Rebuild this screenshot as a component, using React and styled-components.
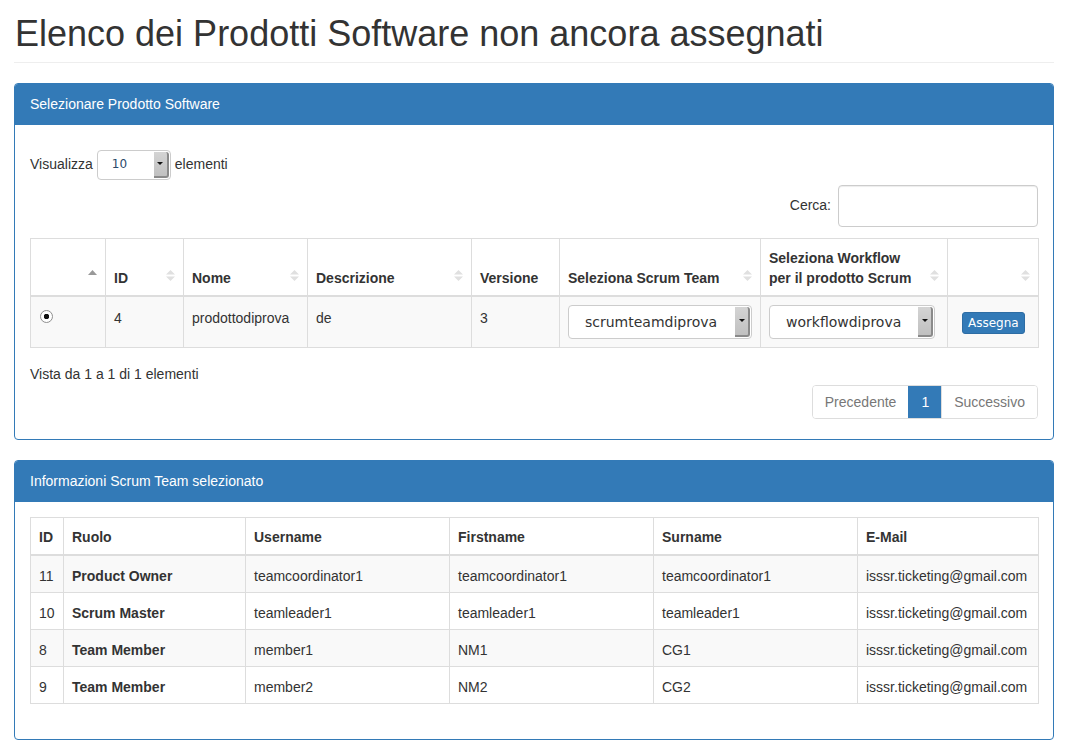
import React from 'react'
import styled, { createGlobalStyle } from 'styled-components'

const GlobalStyle = createGlobalStyle`
    html, body {
        margin: 0;
        padding: 0;
        background: #fff;
    }
    body {
        font-family: "Liberation Sans", Arial, Helvetica, sans-serif;
        font-size: 14px;
        line-height: 1.42857;
        color: #333;
    }
    * { box-sizing: border-box; }
`

const Page = styled.div`
    padding: 14px 15px 0 14px;
`

const PageHeader = styled.h1`
    margin: 0 0 20px;
    padding: 0 0 8px 1px;
    border-bottom: 1px solid #eee;
    font-size: 36px;
    font-weight: 400;
    line-height: 1.1;
    color: #333;
`

const Panel = styled.div`
    border: 1px solid #337ab7;
    border-radius: 4px;
    margin-bottom: 20px;
    background: #fff;
`

const PanelHeading = styled.div`
    background: #337ab7;
    color: #fff;
    padding: 10px 15px;
    border-bottom: 1px solid transparent;
    border-radius: 3px 3px 0 0;
    line-height: 20px;
`

const PanelBody = styled.div`
    padding: 15px;
`

const LengthRow = styled.div`
    display: flex;
    align-items: center;
    gap: 4px;
    margin-top: 10px;
    height: 30px;
`

const FakeSelect = styled.div`
    display: flex;
    align-items: center;
    width: ${p => p.$w}px;
    height: ${p => p.$h}px;
    border: 1px solid #ccc;
    border-radius: 4px;
    background: #fff;
    padding-left: ${p => p.$pl}px;
    font-family: "DejaVu Sans", Verdana, sans-serif;
    font-size: ${p => p.$fs}px;
    color: ${p => p.$color || '#333'};
    overflow: hidden;
`

const SelectText = styled.span`
    flex: 1;
    white-space: nowrap;
`

const SelectArrow = styled.span`
    display: flex;
    align-items: center;
    justify-content: center;
    width: 15px;
    align-self: stretch;
    margin: 1px 1px 1px 0;
    background: linear-gradient(#d4d4d4, #c0c0c0);
    border-right: 2px solid #8a8a8a;
    border-bottom: 2px solid #8a8a8a;
    border-radius: 0 3px 3px 0;
    &::after {
        content: '';
        border-left: 3px solid transparent;
        border-right: 3px solid transparent;
        border-top: 3px solid #111;
    }
`

const FilterRow = styled.div`
    display: flex;
    justify-content: flex-end;
    align-items: center;
    gap: 7px;
    margin-top: 5px;
`

const SearchInput = styled.div`
    width: 200px;
    height: 42px;
    border: 1px solid #ccc;
    border-radius: 4px;
    box-shadow: inset 0 1px 1px rgba(0, 0, 0, 0.075);
`

const Table = styled.table`
    width: 1008px;
    table-layout: fixed;
    border-collapse: collapse;
    margin-top: ${p => p.$mt || 0}px;
    margin-bottom: ${p => p.$mb}px;
    border: 1px solid #ddd;
`

const Th = styled.th`
    position: relative;
    width: ${p => p.$w}px;
    padding: 9px ${p => (p.$sort ? 30 : 8)}px 7px 8px;
    text-align: left;
    vertical-align: bottom;
    font-weight: 700;
    line-height: 20px;
    border: 1px solid #ddd;
    border-bottom: 2px solid #ddd;
`

const Tr = styled.tr`
    background: ${p => (p.$striped ? '#f9f9f9' : '#fff')};
`

const Td = styled.td`
    padding: ${p => p.$pt || 9}px 8px ${p => 16 - (p.$pt || 9)}px;
    vertical-align: top;
    line-height: 20px;
    border: 1px solid #ddd;
    font-weight: ${p => (p.$bold ? 700 : 400)};
    white-space: nowrap;
`

const SortIcon = styled.svg`
    position: absolute;
    right: 8px;
    bottom: ${p => (p.$single ? 20 : 14)}px;
`

const Radio = styled.span`
    display: inline-block;
    margin: 2px 0 0 1px;
    width: 13px;
    height: 13px;
    border-radius: 50%;
    border: 1px solid #8f8f8f;
    background: radial-gradient(circle, #111 0 2.5px, #fff 3px);
`

const AssignButton = styled.button`
    margin: 7px 0 0 6px;
    padding: 1px 5px;
    font-family: "DejaVu Sans", Verdana, sans-serif;
    font-size: 12px;
    line-height: 18px;
    color: #fff;
    background: #337ab7;
    border: 1px solid #2e6da4;
    border-radius: 3px;
`

const Info = styled.div`
    padding-top: 10px;
    line-height: 20px;
`

const PaginationRow = styled.div`
    display: flex;
    justify-content: flex-end;
    margin: 1px 0 5px;
`

const Pagination = styled.div`
    display: flex;
    border: 1px solid #ddd;
    border-radius: 4px;
    overflow: hidden;
`

const PageItem = styled.span`
    padding: 6px 12px;
    line-height: 20px;
    color: ${p => (p.$active ? '#fff' : '#777')};
    background: ${p => (p.$active ? '#337ab7' : '#fff')};
    border-left: ${p => (p.$first ? 'none' : p.$active ? '1px solid #337ab7' : '1px solid #ddd')};
`

const Sort = ({ single }) =>
    single ? (
        <SortIcon $single width="9" height="5" viewBox="0 0 9 5">
            <polygon points="4.5,0 9,5 0,5" fill="#999" />
        </SortIcon>
    ) : (
        <SortIcon width="9" height="11" viewBox="0 0 9 11">
            <polygon points="4.5,0 9,4.5 0,4.5" fill="#e0e0e0" />
            <polygon points="0,6.5 9,6.5 4.5,11" fill="#e0e0e0" />
        </SortIcon>
    )

const members = [
    ['11', 'Product Owner', 'teamcoordinator1', 'teamcoordinator1', 'teamcoordinator1'],
    ['10', 'Scrum Master', 'teamleader1', 'teamleader1', 'teamleader1'],
    ['8', 'Team Member', 'member1', 'NM1', 'CG1'],
    ['9', 'Team Member', 'member2', 'NM2', 'CG2'],
]

const App = () => {
    return (
        <Page>
            <GlobalStyle />
            <PageHeader>Elenco dei Prodotti Software non ancora assegnati</PageHeader>

            <Panel>
                <PanelHeading>Selezionare Prodotto Software</PanelHeading>
                <PanelBody>
                    <LengthRow>
                        Visualizza
                        <FakeSelect $w={74} $h={30} $pl={14} $fs={12} $color="#2a4a6b">
                            <SelectText>10</SelectText>
                            <SelectArrow />
                        </FakeSelect>
                        elementi
                    </LengthRow>
                    <FilterRow>
                        Cerca:
                        <SearchInput />
                    </FilterRow>
                    <Table $mt={11} $mb={6}>
                        <thead>
                            <tr>
                                <Th $w={75} $sort><Sort single /></Th>
                                <Th $w={78} $sort>ID<Sort /></Th>
                                <Th $w={124} $sort>Nome<Sort /></Th>
                                <Th $w={164} $sort>Descrizione<Sort /></Th>
                                <Th $w={88}>Versione</Th>
                                <Th $w={201} $sort>Seleziona Scrum Team<Sort /></Th>
                                <Th $w={187} $sort>Seleziona Workflow per il prodotto Scrum<Sort /></Th>
                                <Th $w={91} $sort><Sort /></Th>
                            </tr>
                        </thead>
                        <tbody>
                            <Tr $striped>
                                <Td $pt={11}><Radio /></Td>
                                <Td $pt={11}>4</Td>
                                <Td $pt={11}>prodottodiprova</Td>
                                <Td $pt={11}>de</Td>
                                <Td $pt={11}>3</Td>
                                <Td $pt={8}>
                                    <FakeSelect $w={184} $h={34} $pl={16} $fs={14}>
                                        <SelectText>scrumteamdiprova</SelectText>
                                        <SelectArrow />
                                    </FakeSelect>
                                </Td>
                                <Td $pt={8}>
                                    <FakeSelect $w={166} $h={34} $pl={16} $fs={14}>
                                        <SelectText>workflowdiprova</SelectText>
                                        <SelectArrow />
                                    </FakeSelect>
                                </Td>
                                <Td $pt={8}>
                                    <AssignButton>Assegna</AssignButton>
                                </Td>
                            </Tr>
                        </tbody>
                    </Table>
                    <Info>Vista da 1 a 1 di 1 elementi</Info>
                    <PaginationRow>
                        <Pagination>
                            <PageItem $first>Precedente</PageItem>
                            <PageItem $active>1</PageItem>
                            <PageItem>Successivo</PageItem>
                        </Pagination>
                    </PaginationRow>
                </PanelBody>
            </Panel>

            <Panel>
                <PanelHeading>Informazioni Scrum Team selezionato</PanelHeading>
                <PanelBody>
                    <Table $mb={20}>
                        <thead>
                            <tr>
                                <Th $w={33}>ID</Th>
                                <Th $w={182}>Ruolo</Th>
                                <Th $w={204}>Username</Th>
                                <Th $w={204}>Firstname</Th>
                                <Th $w={204}>Surname</Th>
                                <Th $w={181}>E-Mail</Th>
                            </tr>
                        </thead>
                        <tbody>
                            {members.map((m, i) => (
                                <Tr key={m[0]} $striped={i % 2 === 0}>
                                    <Td $pt={10}>{m[0]}</Td>
                                    <Td $pt={10} $bold>{m[1]}</Td>
                                    <Td $pt={10}>{m[2]}</Td>
                                    <Td $pt={10}>{m[3]}</Td>
                                    <Td $pt={10}>{m[4]}</Td>
                                    <Td $pt={10}>isssr.ticketing@gmail.com</Td>
                                </Tr>
                            ))}
                        </tbody>
                    </Table>
                </PanelBody>
            </Panel>
        </Page>
    )
}

export default App
